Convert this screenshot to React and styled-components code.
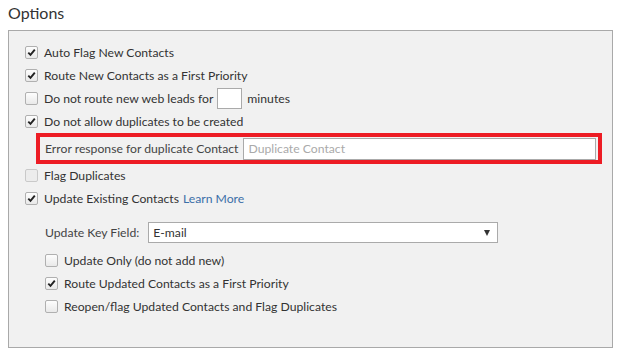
import styled, { createGlobalStyle } from "styled-components";

const Global = createGlobalStyle`
  body {
    margin: 0;
    background: #ffffff;
    font-family: Lato, "Liberation Sans", sans-serif;
    color: #333;
  }
`;

const Page = styled.div`
  padding: 3px 8px 2px 8px;
`;

const Heading = styled.h2`
  margin: 0 0 7px 0;
  font-size: 16px;
  font-weight: 400;
  color: #333;
  line-height: 20px;
`;

const Panel = styled.div`
  background: #f1f1f1;
  border: 1px solid #a9a9a9;
  padding: 10px 0 0 16px;
  height: 318px;
  box-sizing: border-box;
`;

const Row = styled.label`
  display: flex;
  align-items: center;
  height: 23px;
  font-size: 12.2px;
  padding-left: ${(p) => p.$indent || 0}px;
  color: #333;
`;

const Box = styled.span`
  width: 11px;
  height: 11px;
  border: 1px solid #b0b0b0;
  border-radius: 2px;
  background: ${(p) => (p.$disabled ? "#eaeaea" : "linear-gradient(#fdfdfd, #e9e9e9)")};
  margin-right: 6px;
  display: flex;
  align-items: center;
  justify-content: center;
  flex-shrink: 0;
  opacity: ${(p) => (p.$disabled ? 0.6 : 1)};
`;

const SmallInput = styled.span`
  display: inline-block;
  width: 23px;
  height: 19px;
  border: 1px solid #aaa;
  background: #fff;
  margin: 0 5px 0 4px;
`;

const Highlight = styled.div`
  margin: 0 0 0 11px;
  width: 566px;
  height: 31px;
  box-sizing: border-box;
  border: 4px solid #ed1c24;
  display: flex;
  align-items: center;
  padding: 0 2px 0 5px;
  font-size: 12.2px;
  color: #444;
`;

const TextField = styled.div`
  flex: 1;
  margin-left: 5px;
  height: 20px;
  border: 1px solid #aaa;
  background: #fff;
  color: #aaa;
  display: flex;
  align-items: center;
  padding-left: 4px;
`;

const Link = styled.a`
  color: #3b6fa8;
  margin-left: 4px;
  text-decoration: none;
`;

const KeyRow = styled.div`
  display: flex;
  align-items: center;
  padding: 12px 0 6px 20px;
  font-size: 12.2px;
  color: #444;
`;

const Select = styled.div`
  margin-left: 9px;
  height: 19px;
  border: 1px solid #aaa;
  background: #fff;
  display: flex;
  align-items: center;
  justify-content: space-between;
  padding: 0 7px 0 4px;
  box-sizing: content-box;
  width: 337px;
  color: #333;
`;

const Arrow = styled.span`
  width: 0;
  height: 0;
  border-left: 3.5px solid transparent;
  border-right: 3.5px solid transparent;
  border-top: 6px solid #333;
`;

function Check({ checked, disabled }) {
  return (
    <Box $disabled={disabled}>
      {checked && (
        <svg width="9" height="9" viewBox="0 0 9 9">
          <path d="M1.3 4.6 L3.5 6.9 L7.8 1.6" stroke="#222" strokeWidth="1.9" fill="none" />
        </svg>
      )}
    </Box>
  );
}

export default function App() {
  return (
    <>
      <Global />
      <Page>
        <Heading>Options</Heading>
        <Panel>
          <Row>
            <Check checked />
            Auto Flag New Contacts
          </Row>
          <Row>
            <Check checked />
            Route New Contacts as a First Priority
          </Row>
          <Row>
            <Check />
            Do not route new web leads for
            <SmallInput />
            minutes
          </Row>
          <Row>
            <Check checked />
            Do not allow duplicates to be created
          </Row>
          <Highlight>
            Error response for duplicate Contact
            <TextField>Duplicate Contact</TextField>
          </Highlight>
          <Row>
            <Check disabled />
            Flag Duplicates
          </Row>
          <Row>
            <Check checked />
            Update Existing Contacts
            <Link>Learn More</Link>
          </Row>
          <KeyRow>
            Update Key Field:
            <Select>
              E-mail
              <Arrow />
            </Select>
          </KeyRow>
          <Row $indent={20}>
            <Check />
            Update Only (do not add new)
          </Row>
          <Row $indent={20}>
            <Check checked />
            Route Updated Contacts as a First Priority
          </Row>
          <Row $indent={20}>
            <Check />
            Reopen/flag Updated Contacts and Flag Duplicates
          </Row>
        </Panel>
      </Page>
    </>
  );
}
